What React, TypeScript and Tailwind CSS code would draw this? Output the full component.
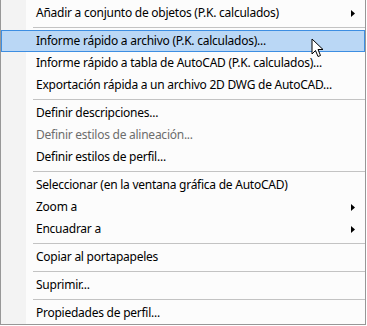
import React from 'react';

type Item =
  | { type: 'sep' }
  | { type: 'item'; label: string; sub?: boolean; disabled?: boolean; active?: boolean };

const items: Item[] = [
  { type: 'item', label: 'Añadir a conjunto de objetos (P.K. calculados)', sub: true },
  { type: 'sep' },
  { type: 'item', label: 'Informe rápido a archivo (P.K. calculados)...', active: true },
  { type: 'item', label: 'Informe rápido a tabla de AutoCAD (P.K. calculados)...' },
  { type: 'item', label: 'Exportación rápida a un archivo 2D DWG de AutoCAD...' },
  { type: 'sep' },
  { type: 'item', label: 'Definir descripciones...' },
  { type: 'item', label: 'Definir estilos de alineación...', disabled: true },
  { type: 'item', label: 'Definir estilos de perfil...' },
  { type: 'sep' },
  { type: 'item', label: 'Seleccionar (en la ventana gráfica de AutoCAD)' },
  { type: 'item', label: 'Zoom a', sub: true },
  { type: 'item', label: 'Encuadrar a', sub: true },
  { type: 'sep' },
  { type: 'item', label: 'Copiar al portapapeles' },
  { type: 'sep' },
  { type: 'item', label: 'Suprimir...' },
  { type: 'sep' },
  { type: 'item', label: 'Propiedades de perfil...' },
];

const Arrow = () => (
  <svg width="4" height="7" viewBox="0 0 4 7" className="absolute right-[10px]">
    <path d="M0 0 L4 3.5 L0 7 Z" fill="#000" />
  </svg>
);

const Cursor = () => (
  <svg width="14" height="22" viewBox="0 0 14 22" className="absolute left-[310px] top-[38px]">
    <path
      d="M1 1 L1 16 L4.5 12.5 L7 18.5 L9.5 17.5 L7 11.5 L12 11.5 Z"
      fill="#fff"
      stroke="#000"
      strokeWidth="1"
      strokeLinejoin="miter"
    />
  </svg>
);

export default function App() {
  return (
    <div className="w-[367px] h-[326px] bg-white font-['Segoe_UI','Noto_Sans',sans-serif] text-[12px] tracking-[-0.25px]">
      <div className="relative w-[366px] h-[325px] border-x border-b border-[#979797] bg-[#fcfcfc] pt-[2px]">
        {/* gutter */}
        <div className="absolute left-0 top-0 bottom-0 w-[25px] bg-[#f3f3f3]" />
        {items.map((it, i) =>
          it.type === 'sep' ? (
            <div key={i} className="relative h-[6px] pt-[3px]">
              <div className="ml-[32px] h-px bg-[#c3c3c3]" />
            </div>
          ) : (
            <div
              key={i}
              className={
                it.active
                  ? 'relative flex items-center h-[22px] border border-[#3d8ee2] bg-[#bad7f5] pl-[34px] text-black'
                  : 'relative flex items-center h-[22px] pl-[35px] ' + (it.disabled ? 'text-[#6d6d6d]' : 'text-black')
              }
            >
              <span className="whitespace-nowrap leading-none">{it.label}</span>
              {it.sub && <Arrow />}
            </div>
          )
        )}
        <Cursor />
      </div>
    </div>
  );
}
